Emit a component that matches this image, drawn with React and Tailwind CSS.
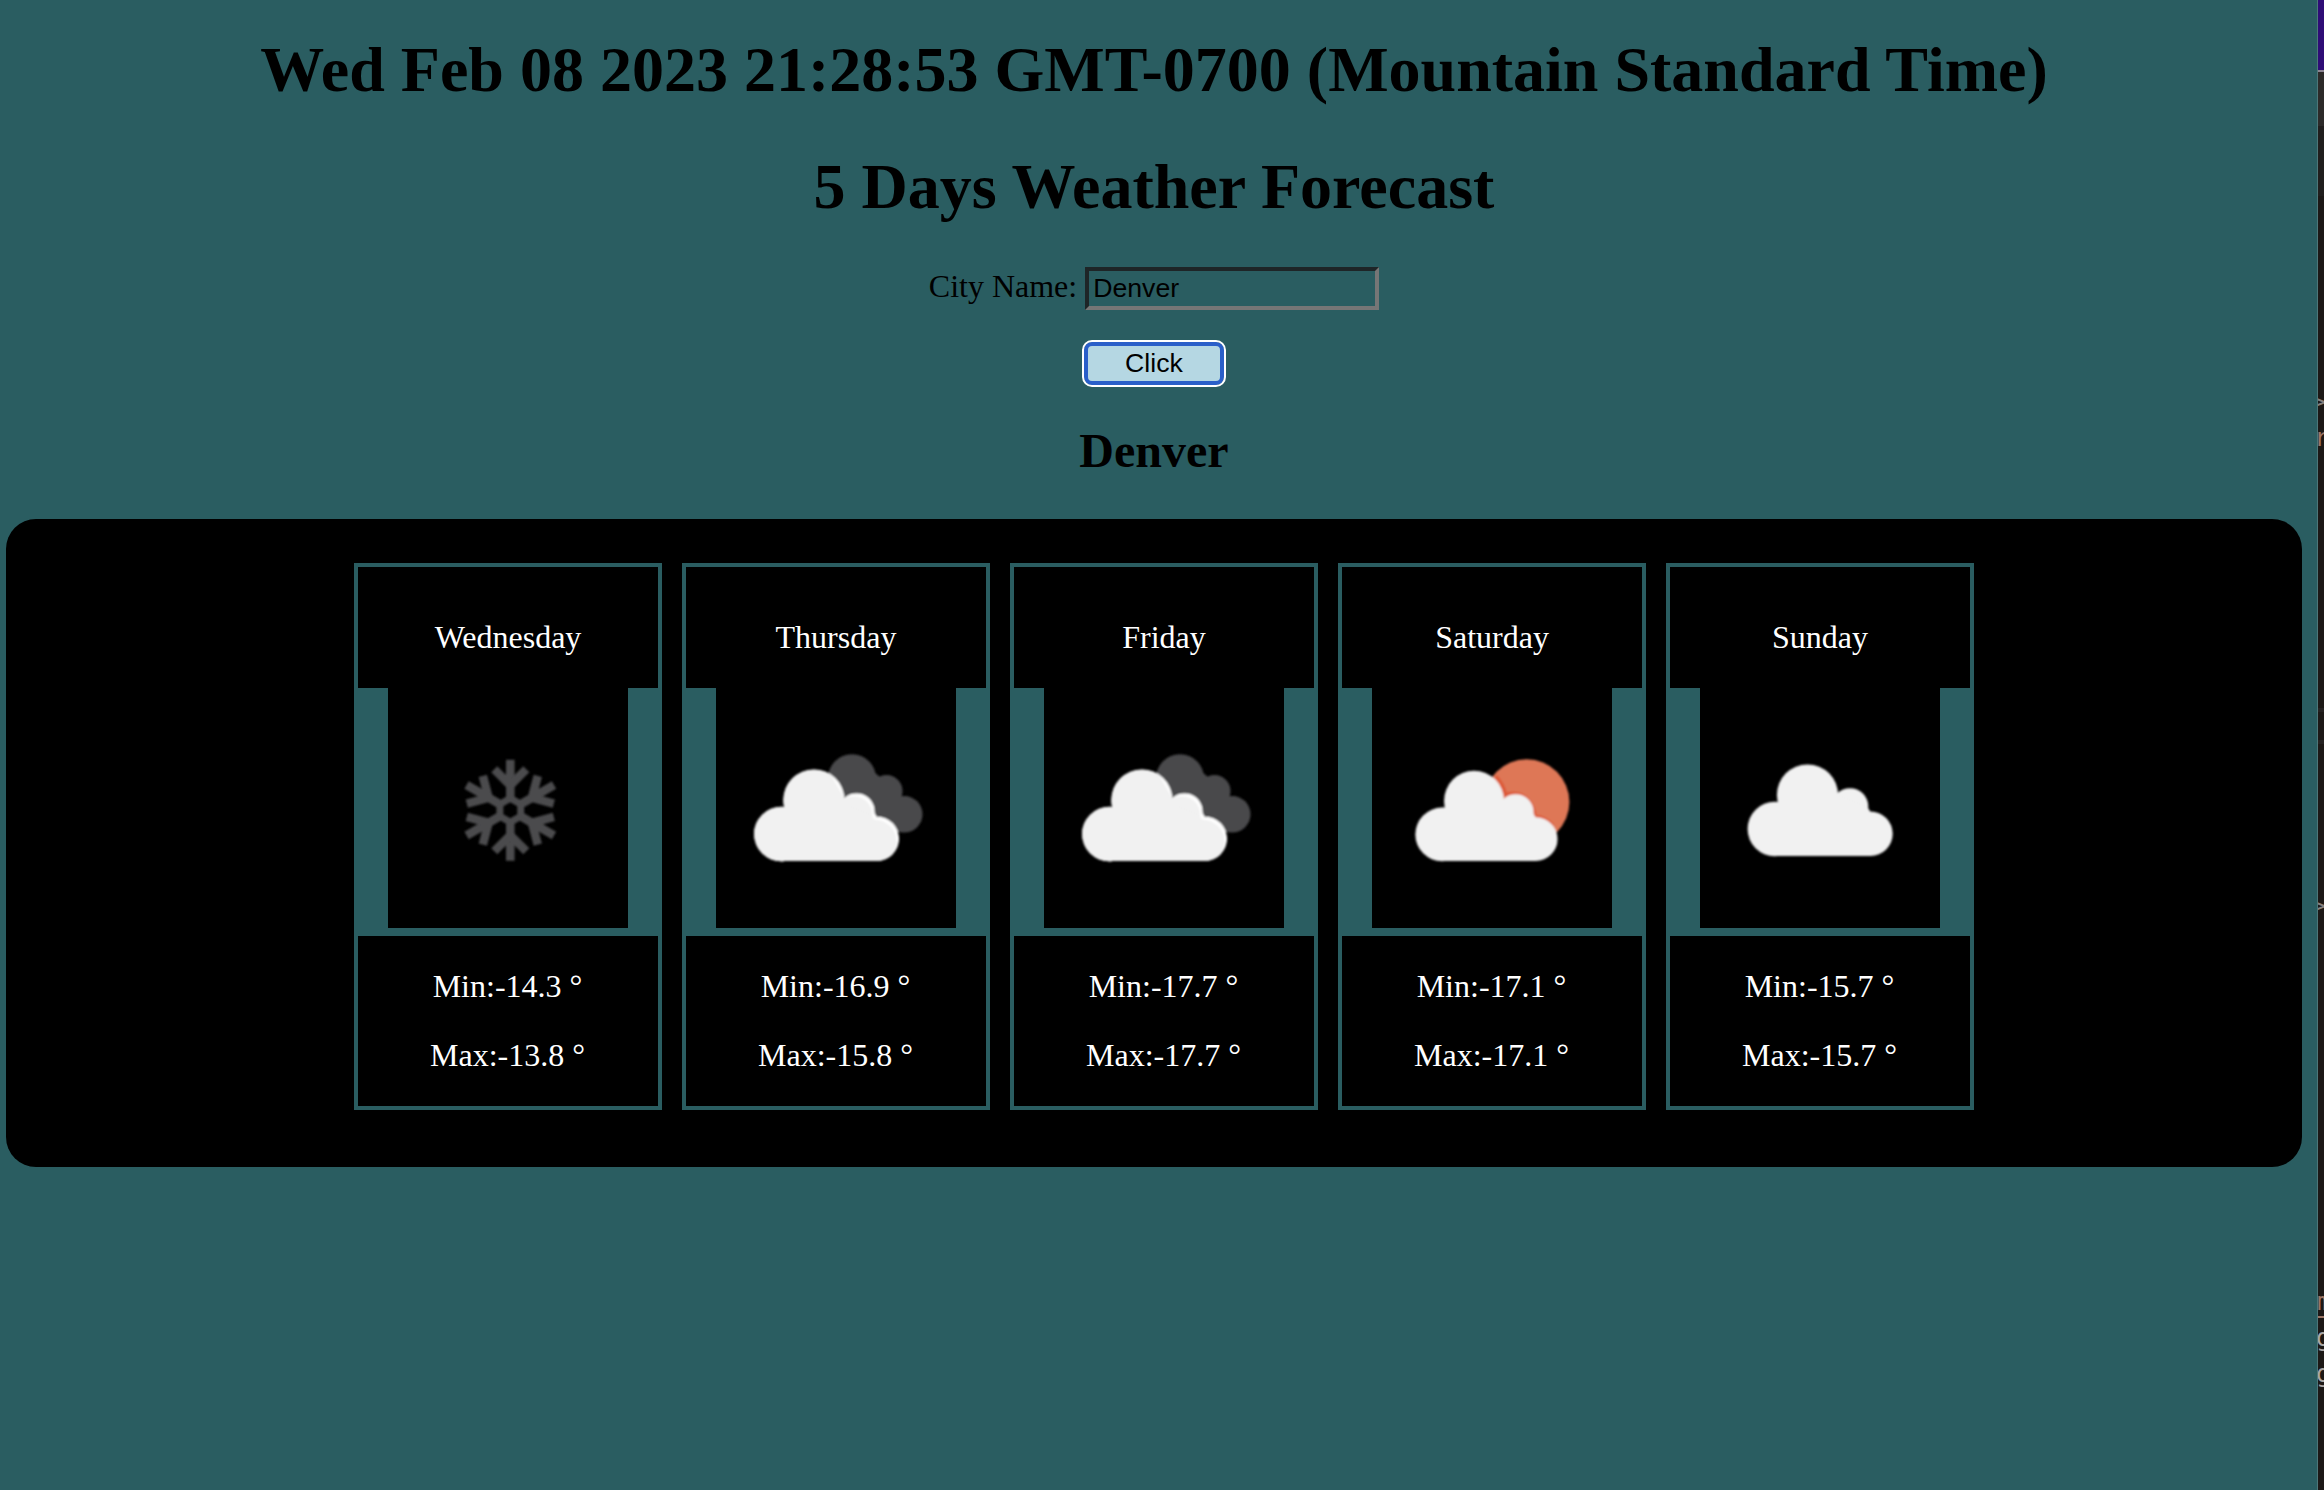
import React from "react";

const days = [
  { name: "Wednesday", icon: "snow", min: "-14.3", max: "-13.8" },
  { name: "Thursday", icon: "broken", min: "-16.9", max: "-15.8" },
  { name: "Friday", icon: "broken", min: "-17.7", max: "-17.7" },
  { name: "Saturday", icon: "sun", min: "-17.1", max: "-17.1" },
  { name: "Sunday", icon: "cloud", min: "-15.7", max: "-15.7" },
];

function CloudShape() {
  return (
    <>
      <circle cx="65.3" cy="146" r="27.2" />
      <circle cx="98" cy="112" r="30.6" />
      <circle cx="140.5" cy="123.5" r="18.3" />
      <circle cx="161" cy="150.8" r="22.2" />
      <path d="M65 173 L65 119 L69 119 L128 112 L158 124 L161 129 L161 173 Z" />
    </>
  );
}

function Snowflake() {
  return (
    <g transform="translate(122.3 122.3)" fill="none" stroke="#4b4b4d" strokeWidth="8.6">
      {[0, 60, 120, 180, 240, 300].map((angle) => (
        <g key={angle} transform={`rotate(${angle})`}>
          <path d="M0 -10 V-50.5" />
          <path d="M-16 -41 L0 -25 L16 -41" />
        </g>
      ))}
      <path d="M0 -12 L10.4 -6 V6 L0 12 L-10.4 6 V-6 Z" strokeWidth="7" />
    </g>
  );
}

function WeatherIcon({ kind, id }) {
  return (
    <svg viewBox="0 0 240 240" className="block h-[240px] w-[240px] bg-black">
      <defs>
        <filter id={`soft-${id}`} x="0" y="0" width="240" height="240" filterUnits="userSpaceOnUse">
          <feGaussianBlur stdDeviation="1.2" />
        </filter>
        <clipPath id={`cloud-${id}`}>
          <CloudShape />
        </clipPath>
      </defs>
      <g filter={`url(#soft-${id})`}>
        {kind === "snow" && <Snowflake />}
        {kind === "broken" && (
          <>
            <g fill="#4a4a4c">
              <circle cx="136" cy="90.2" r="24" />
              <circle cx="170.5" cy="103" r="16" />
              <circle cx="188.2" cy="126.3" r="18.3" />
              <path d="M130 110 L158 84 L184 106 L188 144.6 Z" />
            </g>
            <g clipPath={`url(#cloud-${id})`}>
              <g fill="#ffffff">
                <CloudShape />
              </g>
              <g fill="#f1f1f1" transform="translate(-2.5 3)">
                <CloudShape />
              </g>
              <path d="M30 75 H108 L140 130 L166 152 V180 H30 Z" fill="#f1f1f1" />
            </g>
          </>
        )}
        {kind === "sun" && (
          <>
            <circle cx="154.7" cy="114" r="42.7" fill="#de7757" />
            <g transform="translate(6 2.6) scale(0.98 0.985)">
              <path
                d="M120 87 Q128 95 130 106 Q152 100 159.500 124 V128 Q170 128 178 137"
                fill="none"
                stroke="#dd5a38"
                strokeWidth="4"
              />
              <g fill="#f1f1f1">
                <CloudShape />
              </g>
            </g>
          </>
        )}
        {kind === "cloud" && (
          <g fill="#f1f1f1" transform="translate(9.5 -5)">
            <CloudShape />
          </g>
        )}
      </g>
    </svg>
  );
}

function DayCard({ day, id }) {
  return (
    <li className="flex h-[547px] w-[308px] flex-col bg-[#2a5d61] p-1">
      <div className="h-[121px] bg-black pt-[52px]">{day.name}</div>
      <div className="flex justify-center pb-2">
        <WeatherIcon kind={day.icon} id={id} />
      </div>
      <div className="flex flex-1 flex-col gap-8 bg-black pt-8 pr-px">
        <p>Min:{day.min} °</p>
        <p>Max:{day.max} °</p>
      </div>
    </li>
  );
}

function BackgroundWindow() {
  return (
    <aside className="relative h-full w-[6px] shrink-0 overflow-hidden bg-[#1c1816] font-['DejaVu_Sans_Mono',monospace] text-[25px] leading-[30px]">
      <div className="h-[70px] bg-[#2e0c76]" />
      <div className="h-[2px] bg-[#8b8492]" />
      <div className="h-[54px] bg-[#2c2a29]" />
      <div className="h-[70px] bg-[#201e1d]" />
      <div className="mt-[512px] h-[4px] bg-[#252221]" />
      <div className="mt-[28px] h-[4px] bg-[#252221]" />
      <span className="absolute top-[387px] left-[-7px] text-[#85807e]">&gt;</span>
      <span className="absolute top-[423px] left-[-4px] text-[#9b7565]">r</span>
      <span className="absolute top-[891px] left-[-7px] text-[#85807e]">&gt;</span>
      <span className="absolute top-[1287px] left-[-1px] text-[#9b7565]">m</span>
      <div className="absolute top-[1316px] left-0 h-[2px] w-full bg-[#9b7565]" />
      <span className="absolute top-[1323px] left-[-2px] text-[#aaa6a4]">g</span>
      <span className="absolute top-[1359px] left-[-2px] text-[#aaa6a4]">g</span>
    </aside>
  );
}

export default function App() {
  return (
    <div className="flex h-[1490px] w-[2324px] overflow-hidden bg-[#2a5d61] font-['Liberation_Serif',serif] text-[32px] leading-[37px] text-black">
      <main className="flex w-[2317px] shrink-0 flex-col items-center pr-[15px] pl-[6px]">
        <h1 className="mt-[33px] text-[64px] leading-[74px] font-bold whitespace-nowrap">
          Wed Feb 08 2023 21:28:53 GMT-0700 (Mountain Standard Time)
        </h1>
        <h1 className="mt-[43px] text-[64px] leading-[74px] font-bold whitespace-nowrap">5 Days Weather Forecast</h1>
        <label className="mt-[43px] flex h-[43px] items-start gap-[8px]">
          <span className="pt-px">City Name:</span>
          <input
            type="text"
            defaultValue="Denver"
            className="h-[43px] w-[294px] border-4 border-t-[#1e2527] border-r-[#767676] border-b-[#767676] border-l-[#1e2527] bg-transparent px-1 font-['Liberation_Sans',sans-serif] text-[26.67px] leading-[31px] outline-none"
          />
        </label>
        <button className="mt-[32px] h-[43px] w-[140px] rounded-[8px] border-4 border-[#2a5fc9] bg-[#b5d7e3] font-['Liberation_Sans',sans-serif] text-[26.67px] leading-[31px] outline-2 outline-white">
          Click
        </button>
        <h2 className="mt-[38px] text-[48px] leading-[55px] font-bold">Denver</h2>
        <section className="mt-[41px] flex h-[648px] w-[2296px] justify-center rounded-[30px] bg-black pt-[44px] pl-5">
          <ul className="flex gap-5 text-center text-white">
            {days.map((day, i) => (
              <DayCard key={day.name} day={day} id={i} />
            ))}
          </ul>
        </section>
      </main>
      <div className="w-px shrink-0 bg-[#4d7779]" />
      <BackgroundWindow />
    </div>
  );
}
